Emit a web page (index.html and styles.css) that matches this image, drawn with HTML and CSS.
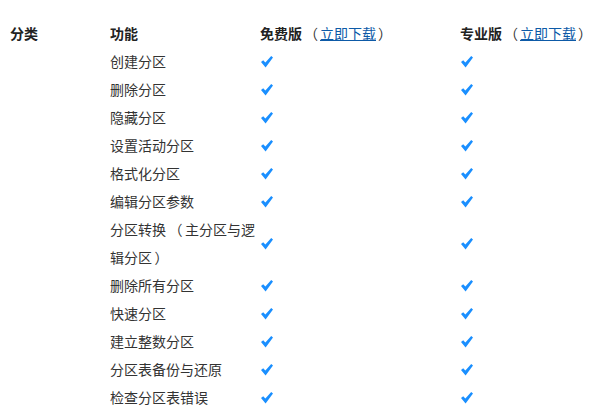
FILE: index.html
```html
<!DOCTYPE html>
<html lang="zh-CN">
<head>
<meta charset="utf-8">
<link rel="stylesheet" href="styles.css">
</head>
<body>
<table class="cmp">
  <colgroup>
    <col class="c1"><col class="c2"><col class="c3"><col class="c4">
  </colgroup>
  <thead>
    <tr>
      <th>分类</th>
      <th>功能</th>
      <th>免费版<span class="paren"><span class="pp">（</span><a href="#">立即下载</a><span class="pp">）</span></span></th>
      <th>专业版<span class="paren"><span class="pp">（</span><a href="#">立即下载</a><span class="pp">）</span></span></th>
    </tr>
  </thead>
  <tbody>
    <tr><td></td><td>创建分区</td><td><svg class="ck" viewBox="0 0 12 12"><path d="M0 6 L2.2 4.2 L4.4 6.6 L10.2 0 L12 1.6 L4.6 11.6 Z"/></svg></td><td><svg class="ck" viewBox="0 0 12 12"><path d="M0 6 L2.2 4.2 L4.4 6.6 L10.2 0 L12 1.6 L4.6 11.6 Z"/></svg></td></tr>
    <tr><td></td><td>删除分区</td><td><svg class="ck" viewBox="0 0 12 12"><path d="M0 6 L2.2 4.2 L4.4 6.6 L10.2 0 L12 1.6 L4.6 11.6 Z"/></svg></td><td><svg class="ck" viewBox="0 0 12 12"><path d="M0 6 L2.2 4.2 L4.4 6.6 L10.2 0 L12 1.6 L4.6 11.6 Z"/></svg></td></tr>
    <tr><td></td><td>隐藏分区</td><td><svg class="ck" viewBox="0 0 12 12"><path d="M0 6 L2.2 4.2 L4.4 6.6 L10.2 0 L12 1.6 L4.6 11.6 Z"/></svg></td><td><svg class="ck" viewBox="0 0 12 12"><path d="M0 6 L2.2 4.2 L4.4 6.6 L10.2 0 L12 1.6 L4.6 11.6 Z"/></svg></td></tr>
    <tr><td></td><td>设置活动分区</td><td><svg class="ck" viewBox="0 0 12 12"><path d="M0 6 L2.2 4.2 L4.4 6.6 L10.2 0 L12 1.6 L4.6 11.6 Z"/></svg></td><td><svg class="ck" viewBox="0 0 12 12"><path d="M0 6 L2.2 4.2 L4.4 6.6 L10.2 0 L12 1.6 L4.6 11.6 Z"/></svg></td></tr>
    <tr><td></td><td>格式化分区</td><td><svg class="ck" viewBox="0 0 12 12"><path d="M0 6 L2.2 4.2 L4.4 6.6 L10.2 0 L12 1.6 L4.6 11.6 Z"/></svg></td><td><svg class="ck" viewBox="0 0 12 12"><path d="M0 6 L2.2 4.2 L4.4 6.6 L10.2 0 L12 1.6 L4.6 11.6 Z"/></svg></td></tr>
    <tr><td></td><td>编辑分区参数</td><td><svg class="ck" viewBox="0 0 12 12"><path d="M0 6 L2.2 4.2 L4.4 6.6 L10.2 0 L12 1.6 L4.6 11.6 Z"/></svg></td><td><svg class="ck" viewBox="0 0 12 12"><path d="M0 6 L2.2 4.2 L4.4 6.6 L10.2 0 L12 1.6 L4.6 11.6 Z"/></svg></td></tr>
    <tr><td></td><td>分区转换<span class="pp">（</span>主分区与逻辑分区<span class="pp">）</span></td><td><svg class="ck" viewBox="0 0 12 12"><path d="M0 6 L2.2 4.2 L4.4 6.6 L10.2 0 L12 1.6 L4.6 11.6 Z"/></svg></td><td><svg class="ck" viewBox="0 0 12 12"><path d="M0 6 L2.2 4.2 L4.4 6.6 L10.2 0 L12 1.6 L4.6 11.6 Z"/></svg></td></tr>
    <tr><td></td><td>删除所有分区</td><td><svg class="ck" viewBox="0 0 12 12"><path d="M0 6 L2.2 4.2 L4.4 6.6 L10.2 0 L12 1.6 L4.6 11.6 Z"/></svg></td><td><svg class="ck" viewBox="0 0 12 12"><path d="M0 6 L2.2 4.2 L4.4 6.6 L10.2 0 L12 1.6 L4.6 11.6 Z"/></svg></td></tr>
    <tr><td></td><td>快速分区</td><td><svg class="ck" viewBox="0 0 12 12"><path d="M0 6 L2.2 4.2 L4.4 6.6 L10.2 0 L12 1.6 L4.6 11.6 Z"/></svg></td><td><svg class="ck" viewBox="0 0 12 12"><path d="M0 6 L2.2 4.2 L4.4 6.6 L10.2 0 L12 1.6 L4.6 11.6 Z"/></svg></td></tr>
    <tr><td></td><td>建立整数分区</td><td><svg class="ck" viewBox="0 0 12 12"><path d="M0 6 L2.2 4.2 L4.4 6.6 L10.2 0 L12 1.6 L4.6 11.6 Z"/></svg></td><td><svg class="ck" viewBox="0 0 12 12"><path d="M0 6 L2.2 4.2 L4.4 6.6 L10.2 0 L12 1.6 L4.6 11.6 Z"/></svg></td></tr>
    <tr><td></td><td>分区表备份与还原</td><td><svg class="ck" viewBox="0 0 12 12"><path d="M0 6 L2.2 4.2 L4.4 6.6 L10.2 0 L12 1.6 L4.6 11.6 Z"/></svg></td><td><svg class="ck" viewBox="0 0 12 12"><path d="M0 6 L2.2 4.2 L4.4 6.6 L10.2 0 L12 1.6 L4.6 11.6 Z"/></svg></td></tr>
    <tr><td></td><td>检查分区表错误</td><td><svg class="ck" viewBox="0 0 12 12"><path d="M0 6 L2.2 4.2 L4.4 6.6 L10.2 0 L12 1.6 L4.6 11.6 Z"/></svg></td><td><svg class="ck" viewBox="0 0 12 12"><path d="M0 6 L2.2 4.2 L4.4 6.6 L10.2 0 L12 1.6 L4.6 11.6 Z"/></svg></td></tr>
  </tbody>
</table>
</body>
</html>
```

FILE: styles.css
```css
html, body {
  margin: 0;
  padding: 0;
  background: #fff;
}
body {
  font-family: "Noto Sans CJK SC", "Noto Sans", sans-serif;
  font-size: 14px;
  color: #333;
  text-spacing-trim: space-all;
}
.cmp {
  border-collapse: collapse;
  table-layout: fixed;
  width: 597px;
  margin-top: 19px;
}
.c1 { width: 100px; }
.c2 { width: 155px; }
.c3 { width: 195px; }
.c4 { width: 147px; }
.cmp th, .cmp td {
  padding: 0 0 0 10px;
  line-height: 28px;
  text-align: left;
  vertical-align: middle;
}
.cmp th:nth-child(3), .cmp td:nth-child(3) {
  padding-left: 5px;
}
.cmp th {
  font-weight: bold;
  color: #222;
  white-space: nowrap;
}
.paren {
  font-weight: normal;
  color: #333;
}
.pp {
  display: inline-block;
  width: 18px;
  text-align: center;
  font-family: "Noto Sans CJK TC", "Noto Sans CJK SC", sans-serif;
  font-weight: normal;
}
td .pp {
  width: 19px;
}
.paren a {
  color: #0d5aa7;
  text-decoration: underline;
}
.ck {
  display: block;
  width: 12px;
  height: 12px;
  margin: 1px 0 0 1px;
}
.ck path {
  fill: #1a8fff;
}
```
